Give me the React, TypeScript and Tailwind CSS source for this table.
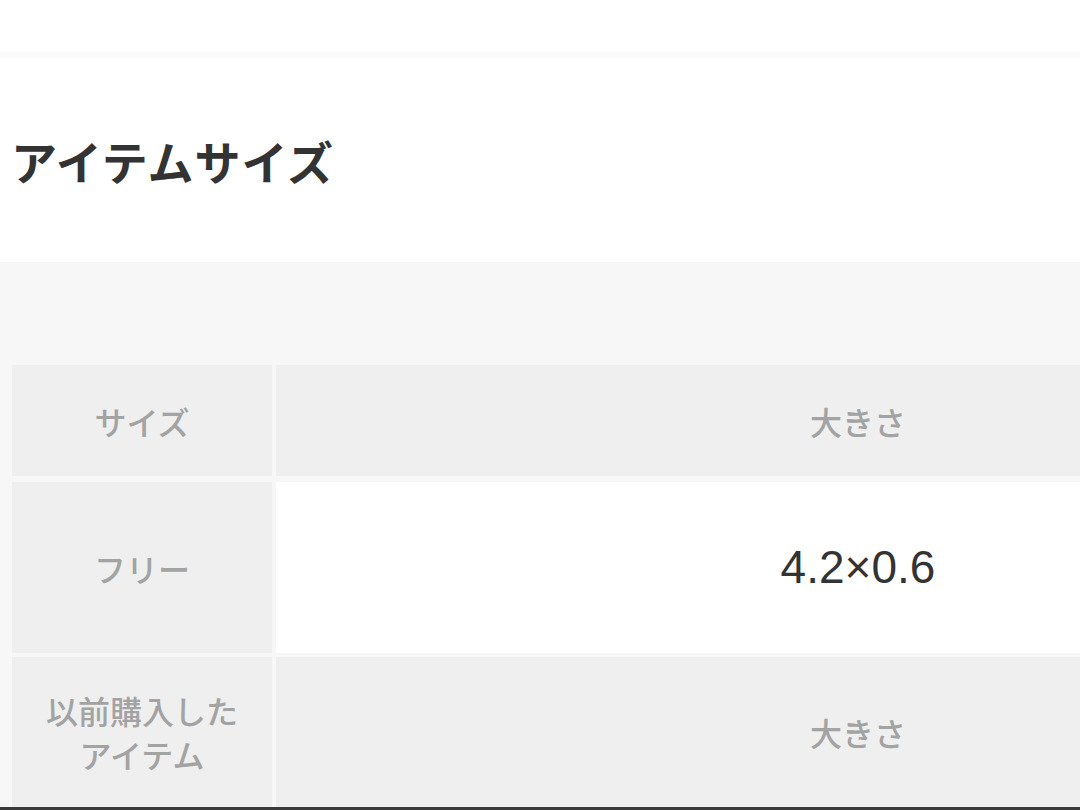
import React from "react";

const jp = { fontFamily: '"Noto Sans CJK JP", "Noto Sans", sans-serif' };

function Row({
  label,
  value,
  h,
  valueWhite,
  valueDark,
}: {
  label: React.ReactNode;
  value: string;
  h: string;
  valueWhite?: boolean;
  valueDark?: boolean;
}) {
  return (
    <div className={`flex gap-[4px] ${h}`}>
      <div className="w-[260px] shrink-0 bg-[#efefef] flex items-center justify-center text-center text-[32px] leading-[44px] font-medium text-[#a3a3a3]">
        {label}
      </div>
      <div
        className={`w-[1164px] shrink-0 flex items-center justify-center ${
          valueWhite ? "bg-white" : "bg-[#efefef]"
        }`}
      >
        {valueDark ? (
          <span
            className="text-[46px] text-[#333333]"
            style={{ fontFamily: '"Liberation Sans", Arial, sans-serif' }}
          >
            {value}
          </span>
        ) : (
          <span className="text-[32px] font-medium text-[#a3a3a3]">{value}</span>
        )}
      </div>
    </div>
  );
}

export default function App() {
  return (
    <div className="w-[1080px] h-[810px] overflow-hidden bg-white flex flex-col" style={jp}>
      <div className="h-[52px] shrink-0 bg-white" />
      <div className="h-[6px] shrink-0 bg-[#fafafa]" />
      <div className="h-[204px] shrink-0 flex items-center pl-[11px]">
        <h2 className="text-[46px] font-bold text-[#333333] leading-none tracking-[1px]">
          アイテムサイズ
        </h2>
      </div>
      <div className="flex-1 bg-[#f7f7f7] pt-[103px] pl-[12px] flex flex-col">
        <Row label="サイズ" value="大きさ" h="h-[111px]" />
        <div className="h-[6px] shrink-0" />
        <Row label="フリー" value="4.2×0.6" h="h-[171px]" valueWhite valueDark />
        <div className="h-[4px] shrink-0" />
        <Row
          label={
            <span>
              以前購入した
              <br />
              アイテム
            </span>
          }
          value="大きさ"
          h="h-[150px]"
        />
      </div>
      <div className="h-[3px] shrink-0 bg-[#3a3a3a]" />
    </div>
  );
}
